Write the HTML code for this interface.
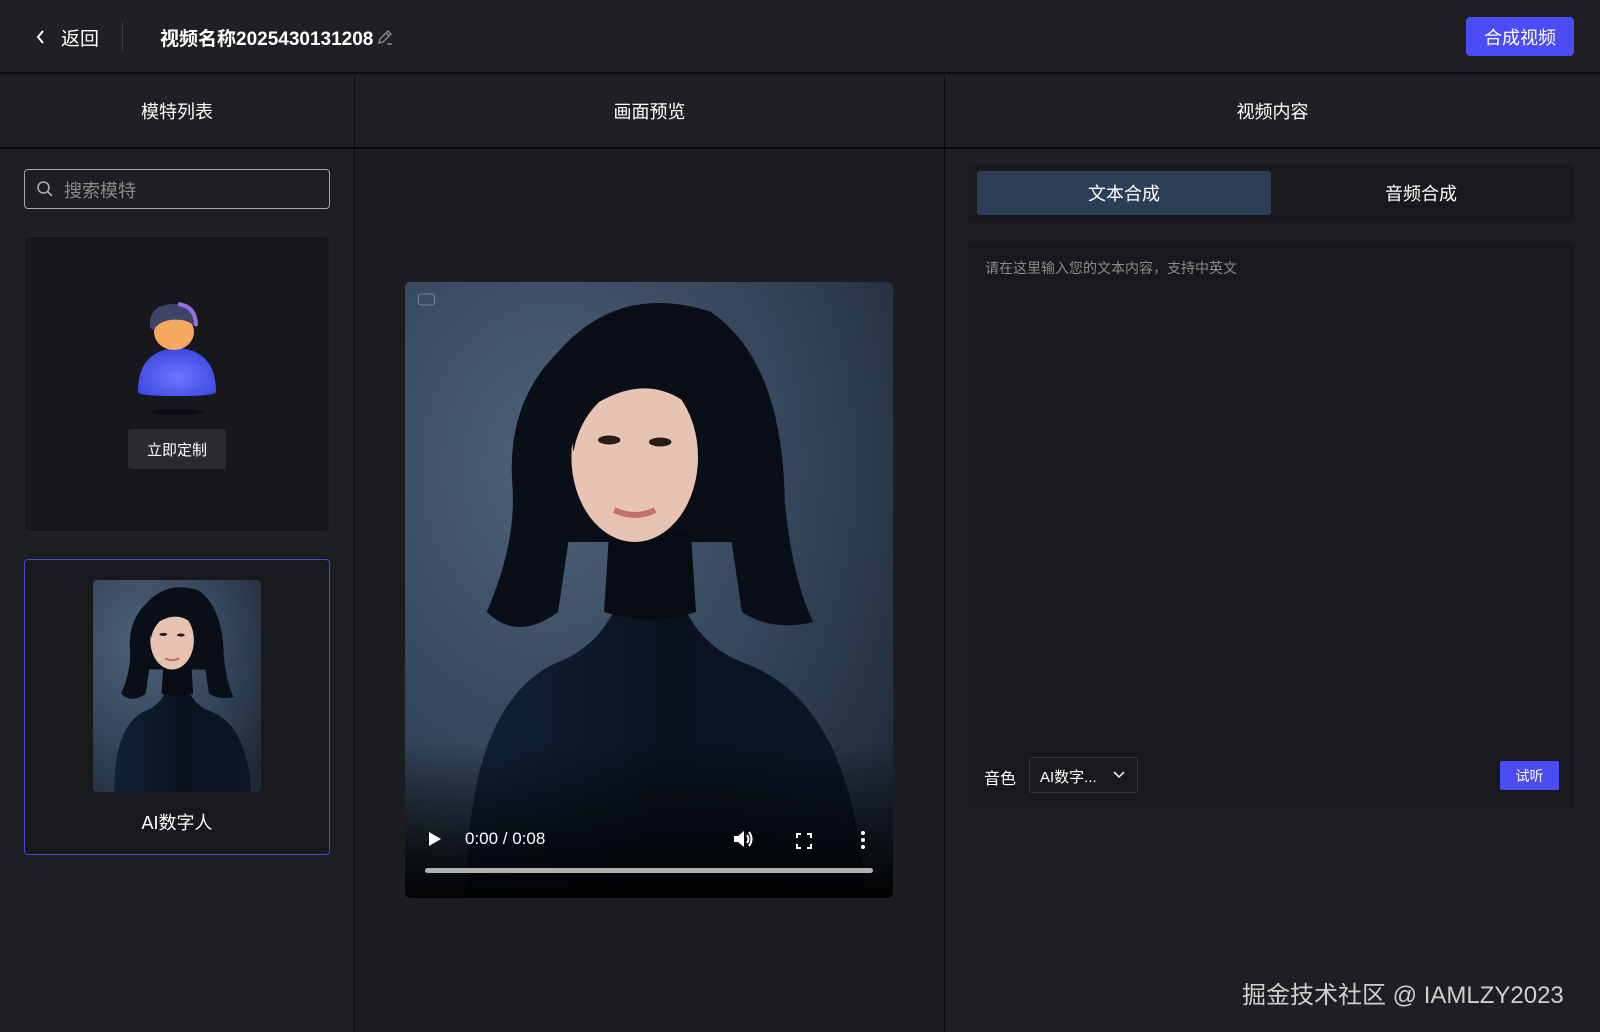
<!DOCTYPE html>
<html><head><meta charset="utf-8"><style>
*{box-sizing:border-box;margin:0;padding:0}
body{width:1600px;height:1032px;background:#1e1f22;font-family:"Liberation Sans","Noto Sans CJK SC",sans-serif;color:#fff;position:relative;overflow:hidden}
.a{position:absolute}
.hdr{left:0;top:0;width:1600px;height:74px;background:#1f2023;border-bottom:2px solid #0b0b0c}
.colh{top:75px;height:74px;border-bottom:2px solid #0b0b0c;display:flex;align-items:center;justify-content:center;font-size:18px;background:#1f2023}
.vline{top:75px;width:1px;height:957px;background:#0b0b0c}
</style></head><body>
<div class="a hdr"></div>
<svg class="a" style="left:35px;top:29px" width="12" height="16" viewBox="0 0 12 16"><path d="M8 2 L3 8 L8 14" stroke="#fff" stroke-width="2" fill="none"/></svg>
<div class="a" style="left:61px;top:24px;font-size:19px">返回</div>
<div class="a" style="left:122px;top:22px;width:1px;height:29px;background:#3a3b3f"></div>
<div class="a" style="left:160px;top:24px;font-size:19px;font-weight:bold">视频名称2025430131208</div>
<svg class="a" style="left:375px;top:28px" width="20" height="20" viewBox="0 0 20 20"><path d="M4 15 L5 11 L13 3 L16 6 L8 14 Z M11 5 L14 8 M12 16 H17" stroke="#888" stroke-width="1.4" fill="none"/></svg>
<div class="a" style="left:1466px;top:17px;width:108px;height:39px;background:#4b4cf4;border-radius:4px;font-size:18px;display:flex;align-items:center;justify-content:center">合成视频</div>

<div class="a colh" style="left:0;width:354px">模特列表</div>
<div class="a colh" style="left:355px;width:589px">画面预览</div>
<div class="a colh" style="left:945px;width:655px">视频内容</div>
<div class="a vline" style="left:354px"></div>
<div class="a vline" style="left:944px"></div>
<div class="a" style="left:355px;top:151px;width:589px;height:881px;background:#1c1d20"></div>

<div class="a" style="left:24px;top:169px;width:306px;height:40px;border:1px solid #a8a8a8;border-radius:4px"></div>
<svg class="a" style="left:36px;top:180px" width="18" height="18" viewBox="0 0 18 18"><circle cx="7.5" cy="7.5" r="5.5" stroke="#aaa" stroke-width="1.6" fill="none"/><path d="M11.5 11.5 L16 16" stroke="#aaa" stroke-width="1.6"/></svg>
<div class="a" style="left:64px;top:177px;font-size:18px;color:#8a8a8a">搜索模特</div>

<div class="a" style="left:24px;top:236px;width:306px;height:296px;background:#17181b;border:1px solid #222326;border-radius:4px"></div>
<svg class="a" style="left:134px;top:298px" width="86" height="120" viewBox="0 0 86 120">
<defs><radialGradient id="bd" cx=".5" cy=".6" r=".6"><stop offset="0" stop-color="#6b78ff"/><stop offset="1" stop-color="#3d47e0"/></radialGradient></defs>
<ellipse cx="43" cy="114" rx="26" ry="3" fill="#0d0d0f"/>
<path d="M4 94 Q4 52 43 50 Q82 52 82 94 Q82 98 43 98 Q4 98 4 94Z" fill="url(#bd)"/>
<ellipse cx="40" cy="34" rx="20" ry="18" fill="#f5a860"/>
<path d="M16 30 Q14 6 40 6 Q64 6 62 30 Q54 20 36 22 Q24 24 20 32Z" fill="#3d4466"/>
<path d="M44 6 Q62 8 62 28" stroke="#9b6fe0" stroke-width="4" fill="none"/>
</svg>
<div class="a" style="left:128px;top:429px;width:98px;height:40px;background:#2a2b2f;border-radius:3px;font-size:15px;display:flex;align-items:center;justify-content:center">立即定制</div>

<div class="a" style="left:24px;top:559px;width:306px;height:296px;background:#18191c;border:1px solid #4a48d8;border-radius:4px"></div>
<svg class="a" style="left:93px;top:580px;border-radius:4px" width="168" height="212" viewBox="0 0 478 616" preserveAspectRatio="none">
<use href="#ph"/></svg>
<div class="a" style="left:24px;top:809px;width:306px;text-align:center;font-size:18px">AI数字人</div>

<svg class="a" style="left:405px;top:282px;border-radius:5px" width="488" height="616" viewBox="0 0 478 616" preserveAspectRatio="none">
<defs>
<radialGradient id="bg" cx=".3" cy=".3" r=".9"><stop offset="0" stop-color="#4d6179"/><stop offset=".55" stop-color="#34465c"/><stop offset="1" stop-color="#1e2836"/></radialGradient>
<linearGradient id="fd" x1="0" y1="0" x2="0" y2="1"><stop offset="0" stop-color="#000" stop-opacity="0"/><stop offset="1" stop-color="#000" stop-opacity=".95"/></linearGradient>
<linearGradient id="sw" x1="0" y1="0" x2="1" y2="0"><stop offset="0" stop-color="#102238"/><stop offset=".5" stop-color="#0a1220"/><stop offset="1" stop-color="#0c1626"/></linearGradient>
<g id="ph">
<rect width="478" height="616" fill="url(#bg)"/>
<path d="M60 616 Q60 420 150 380 Q200 360 215 300 L265 300 Q280 360 330 380 Q440 420 450 616Z" fill="url(#sw)"/>
<path d="M150 70 Q210 0 300 30 Q370 80 372 220 Q380 300 400 340 Q360 350 330 330 L320 260 L160 260 L150 330 Q110 360 80 330 Q110 260 105 200 Q100 120 150 70Z" fill="#0a0e16"/>
<path d="M200 250 L280 250 L285 330 Q240 345 195 330Z" fill="#080b12"/>
<ellipse cx="225" cy="175" rx="62" ry="85" fill="#e6c3b3"/>
<path d="M160 130 Q190 50 290 80 Q305 110 295 140 Q250 85 190 120 Q170 140 165 170Z" fill="#0a0e16"/>
<ellipse cx="200" cy="158" rx="11" ry="4.5" fill="#2a1a18"/><ellipse cx="250" cy="160" rx="11" ry="4.5" fill="#2a1a18"/>
<path d="M205 228 Q225 238 245 228" stroke="#c4706e" stroke-width="6" fill="none"/>
</g></defs>
<use href="#ph"/>
<rect y="460" width="478" height="156" fill="url(#fd)"/>
<rect x="13" y="12" width="16" height="11" rx="3" stroke="#7a8595" fill="none"/>
</svg>
<svg class="a" style="left:428px;top:831px" width="14" height="16"><path d="M1 1 L13 8 L1 15Z" fill="#fff"/></svg>
<div class="a" style="left:465px;top:829px;font-size:17px">0:00 / 0:08</div>
<svg class="a" style="left:733px;top:829px" width="22" height="20" viewBox="0 0 22 20"><path d="M1 7 H5 L11 2 V18 L5 13 H1Z" fill="#fff"/><path d="M14 6 Q17 10 14 14 M16 3 Q21 10 16 17" stroke="#fff" stroke-width="2" fill="none"/></svg>
<svg class="a" style="left:796px;top:833px" width="16" height="16" viewBox="0 0 16 16"><path d="M1 5 V1 H5 M11 1 H15 V5 M15 11 V15 H11 M5 15 H1 V11" stroke="#fff" stroke-width="2" fill="none"/></svg>
<svg class="a" style="left:860px;top:830px" width="6" height="20"><circle cx="3" cy="3" r="2" fill="#fff"/><circle cx="3" cy="10" r="2" fill="#fff"/><circle cx="3" cy="17" r="2" fill="#fff"/></svg>
<div class="a" style="left:425px;top:868px;width:448px;height:5px;background:#b0b0b0;border-radius:3px"></div>

<div class="a" style="left:968px;top:164px;width:607px;height:59px;background:#18191c;border-radius:6px"></div>
<div class="a" style="left:977px;top:171px;width:294px;height:44px;background:#2d3d56;border-radius:3px;font-size:18px;display:flex;align-items:center;justify-content:center">文本合成</div>
<div class="a" style="left:1276px;top:171px;width:290px;height:44px;font-size:18px;display:flex;align-items:center;justify-content:center">音频合成</div>
<div class="a" style="left:968px;top:241px;width:607px;height:567px;background:#18191c;border-radius:6px"></div>
<div class="a" style="left:985px;top:258px;font-size:14px;color:#8a8a8a">请在这里输入您的文本内容，支持中英文</div>
<div class="a" style="left:984px;top:765px;font-size:16px">音色</div>
<div class="a" style="left:1029px;top:757px;width:109px;height:36px;border:1px solid #333438;border-radius:3px"></div>
<div class="a" style="left:1040px;top:766px;font-size:15px">AI数字...</div>
<svg class="a" style="left:1113px;top:771px" width="12" height="8"><path d="M1 1 L6 6 L11 1" stroke="#fff" stroke-width="1.5" fill="none"/></svg>
<div class="a" style="left:1500px;top:761px;width:59px;height:29px;background:#4b4cf4;border-radius:2px;font-size:14px;display:flex;align-items:center;justify-content:center">试听</div>
<div class="a" style="left:1242px;top:975px;font-size:24px;color:#cfcfcf">掘金技术社区 @ IAMLZY2023</div>
</body></html>
